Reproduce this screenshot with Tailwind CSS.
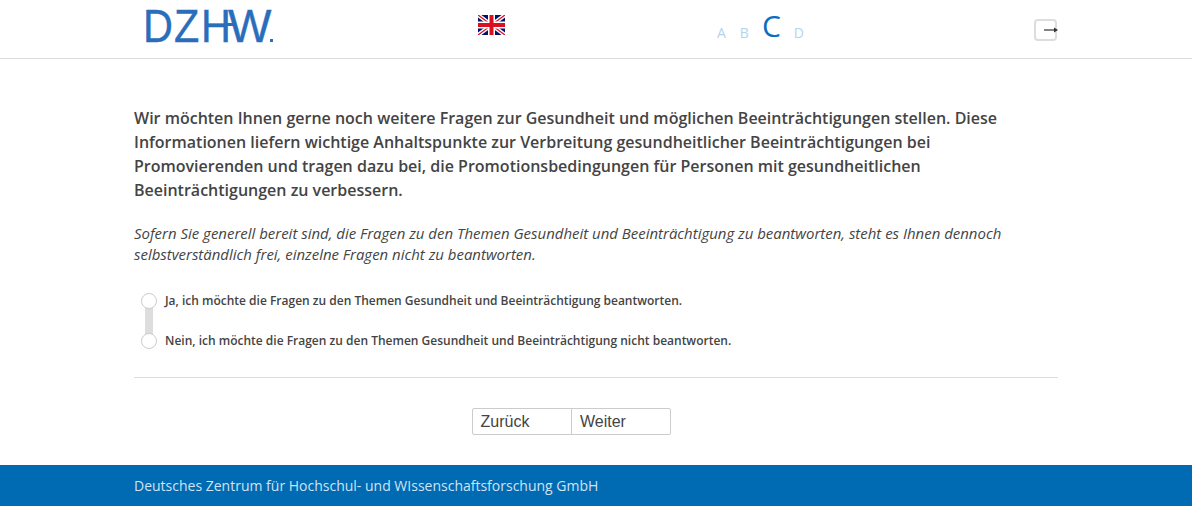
<!DOCTYPE html>
<html lang="de">
<head>
    <meta charset="UTF-8">
    <title>DZHW Befragung</title>
    <script src="https://cdn.jsdelivr.net/npm/@tailwindcss/browser@4"></script>
</head>
<body class="bg-white font-['Open_Sans','Noto_Sans',sans-serif] text-[#444]">
    <!-- Kopfzeile -->
    <header class="h-[59px] border-b border-[#ddd] flex">
        <div class="w-[478px] pl-[143px] pt-[2px] shrink-0">
            <div class="relative h-[46px] font-['Liberation_Sans',sans-serif] text-[46px] leading-[48px] text-[#2a6ebb] [-webkit-text-stroke:0.4px_#2a6ebb] flex">
                <span class="w-[31px] scale-x-90 origin-left">D</span>
                <span class="w-[27px] scale-x-90 origin-left">Z</span>
                <span class="w-[27px] scale-x-90 origin-left">H</span>
                <span class="w-[41px]">W</span>
                <div class="absolute left-[82px] top-[21px] w-[11px] h-[3px] bg-[#2a6ebb]"></div>
                <div class="absolute left-[127px] top-[37px] w-[3px] h-[3px] bg-[#2a6ebb]"></div>
            </div>
        </div>
        <div class="w-[238px] pt-[15px] shrink-0">
            <svg width="27" height="20" viewBox="0 0 27 20">
                <rect width="27" height="20" fill="#00126b"/>
                <path d="M0 0L27 20M27 0L0 20" stroke="#fff" stroke-width="4"/>
                <path d="M0 0L27 20M27 0L0 20" stroke="#d8101f" stroke-width="1.3"/>
                <path d="M13.5 0V20M0 10H27" stroke="#fff" stroke-width="7"/>
                <path d="M13.5 0V20M0 10H27" stroke="#d8101f" stroke-width="4"/>
            </svg>
        </div>
        <div class="w-[318px] shrink-0 flex items-end gap-[14px] pb-[16px] text-[#b3d4ee] text-[14px] leading-[19px] pl-[1px]">
            <span>A</span>
            <span>B</span>
            <span class="text-[30px] leading-[38px] text-[#0a6ebd] ml-[-1px] mb-[-3px]">C</span>
            <span class="ml-[-1px]">D</span>
        </div>
        <div class="pt-[19px]">
            <div class="relative w-[23px] h-[22px] border-2 border-[#ddd] rounded-[4px]">
                <svg class="absolute left-[8px] top-[5px]" width="15" height="8" viewBox="0 0 15 8">
                    <path d="M0 4H11" stroke="#333" stroke-width="1.2"/>
                    <path d="M10 1.5L14 4L10 6.5Z" fill="#333"/>
                </svg>
            </div>
        </div>
    </header>

    <!-- Fragebogen -->
    <main class="w-[924px] ml-[134px] h-[406px] pt-[47px]">
        <p class="text-[16px] leading-[24px] font-semibold">Wir möchten Ihnen gerne noch weitere Fragen zur Gesundheit und möglichen Beeinträchtigungen stellen. Diese Informationen liefern wichtige Anhaltspunkte zur Verbreitung gesundheitlicher Beeinträchtigungen bei Promovierenden und tragen dazu bei, die Promotionsbedingungen für Personen mit gesundheitlichen Beeinträchtigungen zu verbessern.</p>
        <p class="mt-[21px] text-[14.96px] leading-[21px] italic">Sofern Sie generell bereit sind, die Fragen zu den Themen Gesundheit und Beeinträchtigung zu beantworten, steht es Ihnen dennoch selbstverständlich frei, einzelne Fragen nicht zu beantworten.</p>

        <div class="relative mt-[27px] pl-[7px] flex flex-col gap-[22px] text-[12px] leading-[18px] font-semibold">
            <div class="absolute left-[11px] top-[10px] w-[8px] h-[36px] bg-[#ddd]"></div>
            <label class="relative flex items-center gap-[8px]">
                <span class="w-[16px] h-[16px] rounded-full border border-[#ccc] bg-white shrink-0"></span>
                <span>Ja, ich möchte die Fragen zu den Themen Gesundheit und Beeinträchtigung beantworten.</span>
            </label>
            <label class="relative flex items-center gap-[8px]">
                <span class="w-[16px] h-[16px] rounded-full border border-[#ccc] bg-white shrink-0"></span>
                <span>Nein, ich möchte die Fragen zu den Themen Gesundheit und Beeinträchtigung nicht beantworten.</span>
            </label>
        </div>

        <div class="mt-[27px] border-t border-[#ddd]"></div>

        <div class="mt-[30px] ml-[338px] w-[199px] h-[27px] flex border border-[#ccc] rounded-[2px] font-['Liberation_Sans',sans-serif] text-[16px] leading-[25px]">
            <button class="w-[99px] text-left pl-[7.5px] border-r border-[#ccc]">Zurück</button>
            <button class="flex-1 text-left pl-[8px]">Weiter</button>
        </div>
    </main>

    <!-- Fußzeile -->
    <footer class="h-[41px] bg-[#006ab3] pl-[134px] text-[14px] leading-[41px] text-[#cfe3f3]">Deutsches Zentrum für Hochschul- und WIssenschaftsforschung GmbH</footer>
</body>
</html>
